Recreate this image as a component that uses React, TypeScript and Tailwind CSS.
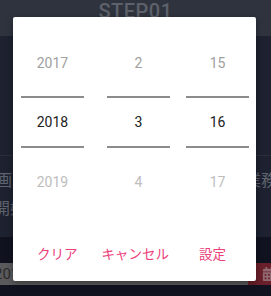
import { FaCalendarAlt } from "react-icons/fa";

const COLUMNS = [
  { prev: "2017", cur: "2018", next: "2019", gap: "ml-[8px]" },
  { prev: "2", cur: "3", next: "4", gap: "ml-[23px]" },
  { prev: "15", cur: "16", next: "17", gap: "ml-[16px]" },
];

export default function App() {
  return (
    <div
      className="relative w-[271px] h-[296px] overflow-hidden bg-[#1d2130]"
      style={{ fontFamily: "Roboto, 'Noto Sans CJK JP', sans-serif" }}
    >
      {/* Background page (dimmed) */}
      <div className="flex flex-col h-full">
        <div className="h-[36px] bg-[#2f333e] flex justify-center">
          <span className="text-[20px] leading-[20px] mt-[1px] text-[#5d616b] font-medium tracking-[0.5px]">
            STEP01
          </span>
        </div>
        <div className="h-[119px]" />
        <div className="h-px bg-[#2a2e3b]" />
        <div className="flex flex-col gap-[10px] pt-[16px] text-[16px] leading-[18px] text-[#5f636d]">
          <div className="flex justify-between -ml-[4px] -mr-[6px]">
            <span>画面</span>
            <span>業務</span>
          </div>
          <div className="-ml-[6px]">開始</div>
        </div>
        <div className="h-[26px] mt-[19px] bg-[#10131f]" />
        <div className="flex h-[22px]">
          <div className="flex-1 bg-[#5a5a5c] overflow-hidden">
            <span className="block -ml-[6px] text-[15px] leading-[22px] text-[#2a2a2a]">
              2018/03/16
            </span>
          </div>
          <div className="w-[23px] bg-[#6a1f2a] flex items-center pl-[14px] overflow-hidden">
            <FaCalendarAlt className="text-[#8f6a70] shrink-0" size={14} />
          </div>
        </div>
        <div className="flex-1 bg-[#10131f]" />
      </div>

      {/* Date picker dialog */}
      <div className="absolute left-[13px] top-[17px] w-[243px] h-[264px] bg-white rounded-[2px] shadow-[0_2px_6px_rgba(0,0,0,0.4)] flex flex-col">
        <div className="flex pt-[35px]">
          {COLUMNS.map((col, i) => (
            <div key={i} className={col.gap + " w-[63px] flex flex-col items-center text-[14px]"}>
              <div className="h-[22px] leading-[22px] text-[#a0a0a0]">{col.prev}</div>
              <div className="w-full h-[2px] bg-[#8c8c8c] mt-[22px]" />
              <div className="h-[48px] leading-[48px] text-[#212121]">{col.cur}</div>
              <div className="w-full h-[2px] bg-[#8c8c8c]" />
              <div className="h-[22px] leading-[22px] mt-[23px] text-[#bdbdbd]">{col.next}</div>
            </div>
          ))}
        </div>
        <div className="flex-1" />
        <div className="flex items-center h-[28px] mb-[13px] text-[13.5px] text-[#ec407a]">
          <span className="ml-[24px]">クリア</span>
          <span className="ml-[24px]">キャンセル</span>
          <span className="ml-[30px]">設定</span>
        </div>
      </div>
    </div>
  );
}
